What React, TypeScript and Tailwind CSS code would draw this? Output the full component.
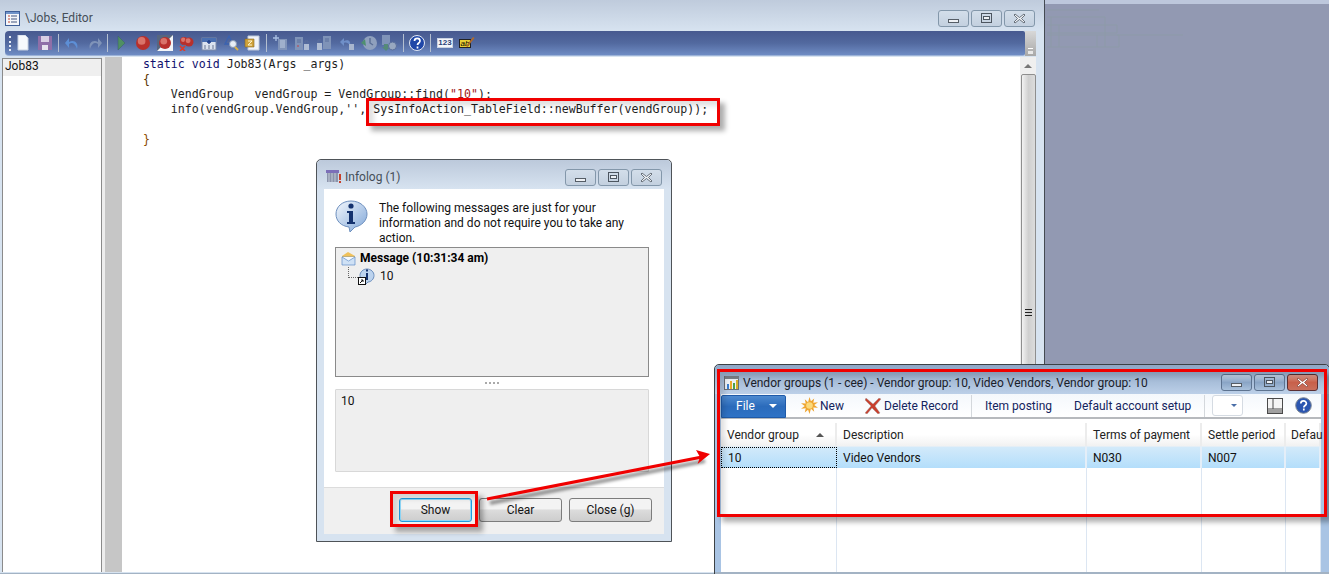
import type { ReactNode } from 'react';

const ui = "font-['Roboto',sans-serif]";

function CaptionButton({ kind, active }: { kind: 'min' | 'max' | 'close'; active?: boolean }) {
  const hot = active && kind === 'close';
  return (
    <div
      className={`w-[31px] h-[17px] rounded-[3px] border flex items-center justify-center ${
        hot
          ? 'border-[#5a2f33] bg-gradient-to-b from-[#dd9a8a] via-[#c8604a] to-[#c96f5c]'
          : active
            ? 'border-[#5d7390] bg-gradient-to-b from-[#c3d4e8] via-[#8aa5c6] to-[#a9c1dc]'
            : 'border-[#8397aa] bg-gradient-to-b from-[#d3deea] to-[#c3d0df]'
      }`}
    >
      <svg width="13" height="11" viewBox="0 0 13 11">
        {kind === 'min' && <rect x="1.5" y="6.5" width="10" height="3" fill="#eef1f5" stroke="#555d66" />}
        {kind === 'max' && (
          <>
            <rect x="1.5" y="0.5" width="10" height="9" fill="none" stroke="#4d5660" />
            <rect x="3.5" y="3.5" width="6" height="3" fill="#eef1f5" stroke="#4d5660" />
          </>
        )}
        {kind === 'close' && (
          <path
            d="M2 1l4.5 3.5L11 1l1 1-3.5 3.5L12 9l-1 1-4.5-3.5L2 10 1 9l3.5-3.5L1 2z"
            fill={hot ? '#fff' : '#eef1f5'}
            stroke={hot ? '#8a4a40' : '#4d5660'}
            strokeWidth="0.8"
          />
        )}
      </svg>
    </div>
  );
}

function Captions({ active }: { active?: boolean }) {
  return (
    <div className="flex gap-[2px]">
      <CaptionButton kind="min" active={active} />
      <CaptionButton kind="max" active={active} />
      <CaptionButton kind="close" active={active} />
    </div>
  );
}

function Sep({ className }: { className: string }) {
  return <div className={`w-px h-[18px] shrink-0 bg-[#b4bfd0] ${className}`} />;
}

function Ball({ x = 8, y = 8, r = 7 }: { x?: number; y?: number; r?: number }) {
  return (
    <>
      <circle cx={x} cy={y} r={r} fill="#b8302c" />
      <circle cx={x - r * 0.2} cy={y - r * 0.3} r={r * 0.55} fill="#d9736a" />
    </>
  );
}

function Tool({ className, children }: { className: string; children: ReactNode }) {
  return (
    <svg width="16" height="16" viewBox="0 0 16 16" className={`shrink-0 ${className}`}>
      {children}
    </svg>
  );
}

function Toolbar() {
  const dim = '#7f93b8';
  const dimDark = '#5a6f9c';
  return (
    <div className="w-[1020px] h-[25px] ml-[5px] rounded-l-[4px] rounded-r-[2px] flex items-center bg-gradient-to-b from-[#47598f] via-[#52699f] to-[#6f8cc4] border-b border-[#9db3d8]">
      <div className="ml-[4px] w-[3px] h-[15px] border-l-2 border-dotted border-[#e6ebf5]" />
      <Tool className="ml-[3px]">
        <path d="M3 0h7l3 3v12H3z" fill="#f7f9fc" stroke="#c8d2e2" />
      </Tool>
      <Tool className="ml-[6px]">
        <path d="M1 1h14v14H1z" fill="#8f6fa8" />
        <rect x="4" y="1" width="8" height="6" fill="#d9cfe4" />
        <rect x="5" y="10" width="6" height="5" fill="#e7e3ee" />
      </Tool>
      <Sep className="ml-[5px]" />
      <Tool className="ml-[5px]">
        <path d="M13 14c2-6-3-10-8-7V3L1 8l4 5V9c3-2 6-1 8 5z" fill="#5d8fd6" />
      </Tool>
      <Tool className="ml-[6px]">
        <path d="M4 14c-2-6 3-10 8-7V3l4 5-4 5V9c-3-2-6-1-8 5z" fill={dim} />
      </Tool>
      <Sep className="ml-[5px]" />
      <Tool className="ml-[6px]">
        <path d="M4 1l7 7-7 7z" fill="#4f8f63" stroke="#3b5e6a" strokeWidth="0.5" />
      </Tool>
      <Tool className="ml-[5px]">
        <Ball />
      </Tool>
      <Tool className="ml-[6px]">
        <rect width="16" height="16" fill="#f3f5f8" />
        <path d="M0 0h16L0 16z" fill="#56667f" />
        <Ball r={6} />
      </Tool>
      <Tool className="ml-[6px]">
        <Ball x={5} y={6} r={4} />
        <Ball x={10} y={7} r={4.5} />
        <path d="M1 11l5 5M6 11l-5 5" stroke="#e03a28" strokeWidth="1.6" />
      </Tool>
      <Tool className="ml-[6px]">
        <rect x="1" y="3" width="14" height="12" fill="#dbe3ef" stroke="#7a89a8" />
        <rect x="1" y="3" width="14" height="4" fill="#4a6fb0" />
        <path d="M8 5v4M6 7h4" stroke="#1f3f8a" strokeWidth="1.4" />
        <path d="M3 11h2M7 11h2M11 11h2M3 13h2M7 13h2M11 13h2" stroke="#6a7894" />
      </Tool>
      <Tool className="ml-[6px]">
        <path d="M6 1L2 9h8z" fill="none" stroke="#3a62b0" strokeWidth="1.3" />
        <circle cx="10" cy="9" r="3.5" fill="#e8eef6" stroke="#8a9ab5" />
        <path d="M12 12l3 3" stroke="#d8b24a" strokeWidth="2" />
      </Tool>
      <Tool className="ml-[5px]">
        <path d="M4 1h11v14H4z" fill="#f1f4f9" stroke="#c1ccdc" />
        <path d="M1 4h9v8H1z" fill="#cfa23a" stroke="#8a6a20" strokeWidth="0.6" />
        <path d="M4 6h4L4 10h4" stroke="#fff3c8" fill="none" />
      </Tool>
      <Sep className="ml-[6px]" />
      <Tool className="ml-[6px]">
        <path d="M5 4h9v11H5z" fill={dim} />
        <path d="M7 6h5M7 8h5M7 10h5M7 12h5" stroke="#c0cde0" />
        <path d="M3 0v6M0 3h6" stroke="#a6bde0" strokeWidth="1.4" />
      </Tool>
      <Tool className="ml-[5px]">
        <path d="M1 2h8v13H1z" fill={dim} />
        <path d="M3 5h4M3 7h4" stroke={dimDark} />
        <rect x="3" y="10" width="2" height="2" fill="#9f6a80" />
        <path d="M10 9h5v6h-5z" fill="#aebcd4" />
        <path d="M11 9V6h3v3" fill="none" stroke={dimDark} />
      </Tool>
      <Tool className="ml-[6px]">
        <path d="M7 1h8v13H7z" fill={dim} />
        <path d="M9 4h4M9 6h4" stroke={dimDark} />
        <path d="M1 8h5v7H1z" fill="#aebcd4" />
        <path d="M2 8V5h3" fill="none" stroke={dimDark} />
      </Tool>
      <Tool className="ml-[7px]">
        <path d="M11 10c1-4-2-6-6-4V3L1 7l4 4V8c2-1 4 0 6 2z" fill="#6f8fc8" />
        <rect x="10" y="9" width="5" height="6" fill="#a8b6ce" />
      </Tool>
      <Tool className="ml-[6px]">
        <circle cx="9" cy="8" r="7" fill="#8fa0bd" />
        <path d="M9 3v5l3 2" stroke="#5b6f96" fill="none" strokeWidth="1.4" />
        <path d="M0 8l4-4 1 7z" fill="#4f8f70" />
      </Tool>
      <Tool className="ml-[4px]">
        <path d="M1 0h8v10H1z" fill={dim} />
        <path d="M3 9h4v3h2l-4 4-4-4h2z" fill="#558a78" />
        <circle cx="11.5" cy="11" r="4" fill="#98a8c0" stroke={dimDark} />
      </Tool>
      <Sep className="ml-[6px]" />
      <Tool className="ml-[5px]">
        <circle cx="8" cy="8" r="7.5" fill="#1f47a8" stroke="#e4e9f3" />
        <path d="M5.5 6c0-3.5 5.5-3.5 5.5 0 0 2-2.500 2-2.500 4M8.500 11.500v2" stroke="#fff" strokeWidth="1.700" fill="none" />
      </Tool>
      <Sep className="ml-[5px]" />
      <div className="ml-[6px] w-[16px] h-[10px] shrink-0 bg-[#f5f7fb] border border-[#c9d2e2] flex items-center justify-center font-['Liberation_Sans',sans-serif] text-[8px] leading-none font-bold text-[#2b3f78]">
        123
      </div>
      <div className="relative ml-[6px] w-[16px] h-[16px] shrink-0">
        <div className="mt-[4px] w-[12px] h-[9px] bg-[#e7cf35] border border-[#222] flex items-center justify-center font-['Liberation_Sans',sans-serif] text-[8px] leading-none italic text-black">
          ab
        </div>
        <svg width="16" height="16" viewBox="0 0 16 16" className="absolute left-0 top-0">
          <path d="M7 11l7-9 1.500 1-7 9z" fill="#b06a2a" />
        </svg>
      </div>
    </div>
  );
}

function CodeLine({ children }: { children?: ReactNode }) {
  return <div className="h-[15px] leading-[15px] whitespace-pre">{children}</div>;
}

function MainEditor() {
  return (
    <div className="w-[1045px] h-full flex flex-col bg-[#d7e3f0] border-r border-[#444a52] shrink-0">
      <div className="h-[31px] flex items-center bg-gradient-to-b from-[#bfcbdc] to-[#d7e3f0] pl-[5px] pr-[9px]">
        <svg width="15" height="15" viewBox="0 0 15 15" className="mt-[5px]">
          <rect x="0.500" y="0.500" width="14" height="14" fill="#f4f6fa" stroke="#3f5f98" />
          <rect x="1" y="1" width="13" height="2" fill="#6f93c9" />
          <path d="M3 5h2M3 8h2M3 11h2" stroke="#c2452f" />
          <path d="M6 5h6M6 8h6M6 11h6" stroke="#41557f" />
        </svg>
        <span className={`${ui} ml-[5px] mt-[5px] text-[12px] text-[#454e58] whitespace-pre`}>\Jobs, Editor</span>
        <div className="ml-auto mt-[5px]">
          <Captions />
        </div>
      </div>
      <div className="flex h-[25px]">
        <Toolbar />
        <div className="w-[11px] h-[25px] bg-gradient-to-b from-[#d8d8d8] to-[#a8a8a8] flex flex-col items-center justify-end pb-[2px]">
          <div className="w-[5px] h-px bg-white mb-[2px]" />
          <div className="w-[5px] h-[3px] bg-[#e8e8e8]" />
        </div>
      </div>
      <div className="flex-1 flex min-h-0 pt-px pb-px">
        <div className="w-[100px] ml-[2px] mt-px bg-white border border-b-0 border-[#8b8b8b]">
          <div className={`${ui} h-[17px] bg-[#efefef] pl-[2px] text-[12px] leading-[14px] text-[#111]`}>Job83</div>
        </div>
        <div className="w-[3px] bg-[#ededed]" />
        <div className="w-[17px] bg-[#c6c6c6]" />
        <div className="w-[899px] bg-white pl-[21px] font-['DejaVu_Sans_Mono',monospace] text-[11.600px] text-[#1e1e1e]">
          <CodeLine>
            <span className="text-[#10106e]">static void</span> Job83(Args _args)
          </CodeLine>
          <CodeLine>
            <span className="text-[#5a3300]">{'{'}</span>
          </CodeLine>
          <CodeLine>
            {'    VendGroup   vendGroup = VendGroup::find('}
            <span className="text-[#a01818]">"10"</span>
            {');'}
          </CodeLine>
          <CodeLine>{"    info(vendGroup.VendGroup,'', SysInfoAction_TableField::newBuffer(vendGroup));"}</CodeLine>
          <CodeLine />
          <CodeLine>
            <span className="text-[#8a4a00]">{'}'}</span>
          </CodeLine>
        </div>
        <div className="w-[16px] bg-[#efefef] flex flex-col items-center">
          <div className="h-[16px] flex items-center justify-center mt-px">
            <div className="w-0 h-0 border-x-[4px] border-b-[4px] border-x-transparent border-b-[#777]" />
          </div>
          <div className="flex-1 w-[15px] rounded-t-[2px] border border-[#8e8e8e] bg-gradient-to-r from-[#f2f2f2] via-[#cfcfcf] to-[#dcdcdc] flex flex-col items-center pt-[234px] gap-[2px]">
            <div className="w-[7px] h-px bg-[#222]" />
            <div className="w-[7px] h-px bg-[#222]" />
            <div className="w-[7px] h-px bg-[#222]" />
          </div>
        </div>
        <div className="w-[8px]" />
      </div>
      <div className="h-px bg-[#a3b3c4]" />
    </div>
  );
}

function Desktop() {
  return (
    <div className="flex-1 h-full bg-[#9299b2] border-t-[4px] border-[#bdc7dc]">
      <svg width="140" height="46" viewBox="0 0 140 46" className="mt-[1px]" fill="none" stroke="#8d9aa8">
        <path d="M2 5h52M2 12h58v14M6 12v30M2 20h70v8H2M14 20v22M2 30h72v12H2M52 30v12M60 26v16M72 30h66" />
      </svg>
    </div>
  );
}

function PushButton({ label, className }: { label: string; className: string }) {
  return (
    <div
      className={`${ui} h-[24px] rounded-[3px] border flex items-center justify-center text-[12px] text-[#151515] bg-gradient-to-b from-[#f3f3f3] from-45% via-[#dcdcdc] via-50% to-[#cdcdcd] ${className}`}
    >
      {label}
    </div>
  );
}

function Infolog() {
  return (
    <div className={`${ui} absolute left-[316px] top-[159px] w-[356px] h-[383px] flex flex-col rounded-t-[5px] border border-[#4e5358] bg-[#d7e3f0]`}>
      <div className="h-[29px] shrink-0 flex items-center pl-[9px] pr-[9px] pt-[5px] rounded-t-[5px] bg-gradient-to-b from-[#bcc9db] to-[#d7e3f0]">
        <svg width="16" height="16" viewBox="0 0 16 16">
          <rect y="1" width="13" height="3" fill="#7c6fb8" />
          <path d="M1 4h11v9H1z" fill="#8b94ab" />
          <path d="M3 4v9M6 4v9M9 4v9" stroke="#c4cbd8" />
          <path d="M14 5v6" stroke="#c8402a" strokeWidth="2" />
          <path d="M14 12v2" stroke="#c8402a" strokeWidth="2" />
        </svg>
        <span className="ml-[3px] text-[12px] text-[#454e58]">Infolog (1)</span>
        <div className="ml-auto">
          <Captions />
        </div>
      </div>
      <div className="flex-1 mx-[7px] mb-[7px] min-h-0 bg-white flex flex-col">
        <div className="h-[58px] shrink-0 flex pl-[11px] pt-[11px]">
          <svg width="33" height="32" viewBox="0 0 33 32" className="shrink-0">
            <defs>
              <linearGradient id="bub" x1="0" y1="0" x2="1" y2="1">
                <stop offset="0" stopColor="#f4f8fd" />
                <stop offset="1" stopColor="#7fa6d8" />
              </linearGradient>
            </defs>
            <path d="M16 1c9 0 16 6 16 13 0 7-6 12-12 13l-5 5-1-5C6 26 1 21 1 14 1 7 7 1 16 1z" fill="url(#bub)" stroke="#6d8fbe" />
            <circle cx="16" cy="6" r="2.600" fill="#14326e" />
            <path d="M12 11h6v11h2v2h-8v-2h2v-9h-2z" fill="#14326e" />
          </svg>
          <div className="ml-[11px] mt-[1px] w-[270px] text-[12px] leading-[15px] text-[#111]">
            The following messages are just for your information and do not require you to take any action.
          </div>
        </div>
        <div className="ml-[11px] w-[314px] h-[130px] shrink-0 bg-[#efefef] border border-[#8a8a8a] pl-[5px] pt-[2px]">
          <div className="flex items-center h-[16px]">
            <svg width="15" height="15" viewBox="0 0 15 15">
              <path d="M1 5l6-4 7 4v9H1z" fill="#f0c15a" />
              <path d="M1 6h13v8H1z" fill="#cfe1f5" stroke="#5e8dc8" strokeWidth="0.700" />
              <path d="M1 6l6.500 4L14 6" fill="#f5f9fd" stroke="#5e8dc8" strokeWidth="0.700" />
            </svg>
            <span className="ml-[4px] text-[12px] font-bold text-black">Message (10:31:34 am)</span>
          </div>
          <div className="flex items-center h-[18px] mt-[1px]">
            <div className="ml-[7px] w-[10px] h-[11px] -mt-[8px] border-l border-b border-dotted border-[#666]" />
            <svg width="17" height="17" viewBox="0 0 17 17">
              <path d="M9 1c4 0 7 3 7 6.500S13 14 10 14l-3 3v-3C4 13 2 11 2 7.500S5 1 9 1z" fill="#bcd3ee" stroke="#6d8fbe" />
              <path d="M8 5h2v7H8zM8 1.500h2v2H8z" fill="#14326e" />
              <rect x="0.500" y="9.500" width="7" height="7" fill="#fff" stroke="#111" />
              <path d="M2 15l3-3M3 12h2v2" stroke="#111" fill="none" />
            </svg>
            <span className="ml-[5px] text-[12px] text-[#111]">10</span>
          </div>
        </div>
        <div className="ml-[11px] w-[314px] h-[12px] shrink-0 flex items-center justify-center gap-[2px]">
          <div className="w-[2px] h-[2px] bg-[#aaa]" />
          <div className="w-[2px] h-[2px] bg-[#aaa]" />
          <div className="w-[2px] h-[2px] bg-[#aaa]" />
          <div className="w-[2px] h-[2px] bg-[#aaa]" />
        </div>
        <div className="ml-[11px] w-[314px] h-[83px] shrink-0 bg-[#efefef] border border-[#d8d8d8] rounded-[1px] pl-[5px] pt-[2px] text-[12px] text-[#111]">
          10
        </div>
        <div className="flex-1 mt-[15px] bg-[#f0f0f0] border-t border-[#dcdcdc] flex pt-[10px] pl-[75px]">
          <PushButton label="Show" className="w-[73px] border-[#1f9be0] shadow-[inset_0_0_0_1px_#8fd8f8]" />
          <PushButton label="Clear" className="w-[83px] ml-[7px] border-[#7c7c7c]" />
          <PushButton label="Close (g)" className="w-[83px] ml-[7px] border-[#7c7c7c]" />
        </div>
      </div>
    </div>
  );
}

const columns = [
  { w: 'w-[116px] pl-[6px]', head: 'Vendor group', cell: '10' },
  { w: 'w-[250px] pl-[6px]', head: 'Description', cell: 'Video Vendors' },
  { w: 'w-[115px] pl-[6px]', head: 'Terms of payment', cell: 'N030' },
  { w: 'w-[84px] pl-[6px]', head: 'Settle period', cell: 'N007' },
  { w: 'flex-1 min-w-0 pl-[5px]', head: 'Defau', cell: '' },
];

function VendorWindow() {
  return (
    <div className={`${ui} absolute left-[714px] top-[364px] w-[616px] h-[211px] flex flex-col rounded-t-[5px] border border-[#3d4145] bg-[#a9c4e4]`}>
      <div className="h-[29px] shrink-0 flex items-center pl-[9px] pr-[11px] pt-[6px] rounded-t-[5px] bg-gradient-to-b from-[#8ea6c6] to-[#bcd0e8]">
        <svg width="16" height="16" viewBox="0 0 16 16">
          <rect x="0.500" y="1.500" width="14" height="13" fill="#eef2f6" stroke="#6a6f76" />
          <rect x="1" y="1" width="14" height="3" fill="#7a8088" />
          <rect x="3" y="9" width="2" height="5" fill="#3a7fd0" />
          <rect x="6" y="6" width="2" height="8" fill="#e8a92a" />
          <rect x="9" y="8" width="2" height="6" fill="#4aa04a" />
          <rect x="12" y="5" width="2" height="9" fill="#d8b02a" />
        </svg>
        <span className="ml-[3px] text-[12px] text-[#1a2029] whitespace-nowrap">Vendor groups (1 - cee) - Vendor group: 10, Video Vendors, Vendor group: 10</span>
        <div className="ml-auto">
          <Captions active />
        </div>
      </div>
      <div className="flex-1 ml-[6px] mr-[8px] min-h-0 bg-white flex flex-col">
        <div className="h-[25px] shrink-0 flex items-center bg-gradient-to-b from-[#f4f8fc] to-[#ffffff] border-b-2 border-[#b6b9bd] text-[12px] text-[#14245e] whitespace-nowrap">
          <div className="w-[65px] h-[23px] mt-px shrink-0 rounded-t-[2px] border border-[#1f5aa8] bg-gradient-to-b from-[#4d8ad0] via-[#2b6bbb] to-[#2f73c6] flex items-center pl-[14px] text-white">
            File
            <div className="ml-[14px] w-0 h-0 border-x-[4px] border-t-[4px] border-x-transparent border-t-white" />
          </div>
          <svg width="17" height="17" viewBox="0 0 18 18" className="ml-[15px] shrink-0">
            <path
              d="M9 0l1.500 4.500L14 1.500l-1 4.500 5-.5-4 3 4 3-5-.5 1 4.500-3.500-3L9 18l-1.500-4.500L4 16.500l1-4.500-5 .5 4-3-4-3 5 .5-1-4.500 3.500 3z"
              fill="#efa52f"
            />
            <circle cx="9" cy="9" r="3.500" fill="#fbd97a" />
          </svg>
          <span className="ml-[2px] w-[24px] shrink-0">New</span>
          <svg width="16" height="16" viewBox="0 0 16 16" className="ml-[21px] shrink-0">
            <path d="M1 0l7 6 6-6 2 1-6 7 5 7-2 1-6-6-5 6-2-1 6-7L0 2z" fill="#c8402e" stroke="#9c9c9c" strokeWidth="0.400" />
          </svg>
          <span className="ml-[3px] w-[73px] shrink-0">Delete Record</span>
          <div className="ml-[14px] w-px h-[22px] shrink-0 bg-[#d4d8dc]" />
          <span className="ml-[13px] w-[68px] shrink-0">Item posting</span>
          <span className="ml-[21px] w-[116px] shrink-0">Default account setup</span>
          <div className="ml-[14px] w-px h-[22px] shrink-0 bg-[#d4d8dc]" />
          <div className="ml-[7px] w-[31px] h-[21px] shrink-0 rounded-[3px] border border-[#d5dbe2] bg-white flex items-center justify-end pr-[5px]">
            <div className="w-0 h-0 border-x-[3px] border-t-[3px] border-x-transparent border-t-[#4a6fa8]" />
          </div>
          <svg width="16" height="16" viewBox="0 0 16 16" className="ml-[24px] shrink-0">
            <rect x="0.500" y="0.500" width="15" height="15" fill="#f4f4f4" stroke="#4a4a4a" />
            <path d="M6 1v10M1 11h14" stroke="#4a4a4a" />
            <rect x="1" y="12" width="14" height="3" fill="#a0a0a0" />
          </svg>
          <svg width="17" height="17" viewBox="0 0 17 17" className="ml-[12px] shrink-0">
            <circle cx="8.500" cy="8.500" r="7.800" fill="#2a55b0" stroke="#7d8794" />
            <path d="M5.800 6.500c0-3.500 5.600-3.500 5.600 0 0 2-2.600 2-2.600 4M8.800 11.500v2" stroke="#fff" strokeWidth="1.700" fill="none" />
          </svg>
        </div>
        <div className="h-[4px] shrink-0" />
        <div className="h-[23px] shrink-0 flex bg-gradient-to-b from-white from-50% to-[#f1f1f1] text-[12px] text-[#222]">
          {columns.map((c, i) => (
            <div key={c.head} className={`${c.w} shrink-0 flex items-center border-r-2 border-[#ececec] whitespace-nowrap`}>
              {c.head}
              {i === 0 && <div className="ml-[17px] w-0 h-0 border-x-[4px] border-b-[4px] border-x-transparent border-b-[#555]" />}
            </div>
          ))}
        </div>
        <div className="h-[22px] shrink-0 flex border-t border-[#e4eef6] bg-gradient-to-b from-[#d3eafa] to-[#b3defb] text-[12px] text-[#111]">
          {columns.map((c, i) => (
            <div
              key={c.head}
              className={`${c.w} shrink-0 flex items-center ${
                i === 0 ? 'border border-dotted border-black' : 'border-r-2 border-[#e4eef8]'
              }`}
            >
              {c.cell}
            </div>
          ))}
        </div>
        <div className="flex-1 flex">
          {columns.map((c) => (
            <div key={c.head} className={`${c.w} shrink-0 border-r border-[#dce6f2]`} />
          ))}
        </div>
      </div>
      <div className="h-[2px] bg-[#a3b3c4]" />
    </div>
  );
}

const callout = 'absolute border-[3px] border-[#f00000] pointer-events-none shadow-[5px_5px_5px_rgba(0,0,0,0.32),inset_5px_5px_5px_rgba(0,0,0,0.12)]';

function Arrow() {
  return (
    <svg width="240" height="60" viewBox="0 0 240 60" className="absolute left-[480px] top-[448px] pointer-events-none">
      <g transform="translate(3 4)" className="blur-[1.5px]">
        <path d="M7 51L222 9" stroke="#000" strokeOpacity="0.4" strokeWidth="4" />
      </g>
      <path d="M7 51L222 9" stroke="#f00000" strokeWidth="3" />
      <path d="M230 6L216 2l4 7-2.400 7z" fill="#f00000" />
    </svg>
  );
}

export default function App() {
  return (
    <div className="relative w-[1329px] h-[574px] flex overflow-hidden bg-white">
      <MainEditor />
      <Desktop />
      <Infolog />
      <VendorWindow />
      <div className={`${callout} left-[366px] top-[98px] w-[354px] h-[28px]`} />
      <div className={`${callout} left-[390px] top-[491px] w-[88px] h-[36px]`} />
      <div className={`${callout} left-[717px] top-[369px] w-[610px] h-[148px]`} />
      <Arrow />
    </div>
  );
}
